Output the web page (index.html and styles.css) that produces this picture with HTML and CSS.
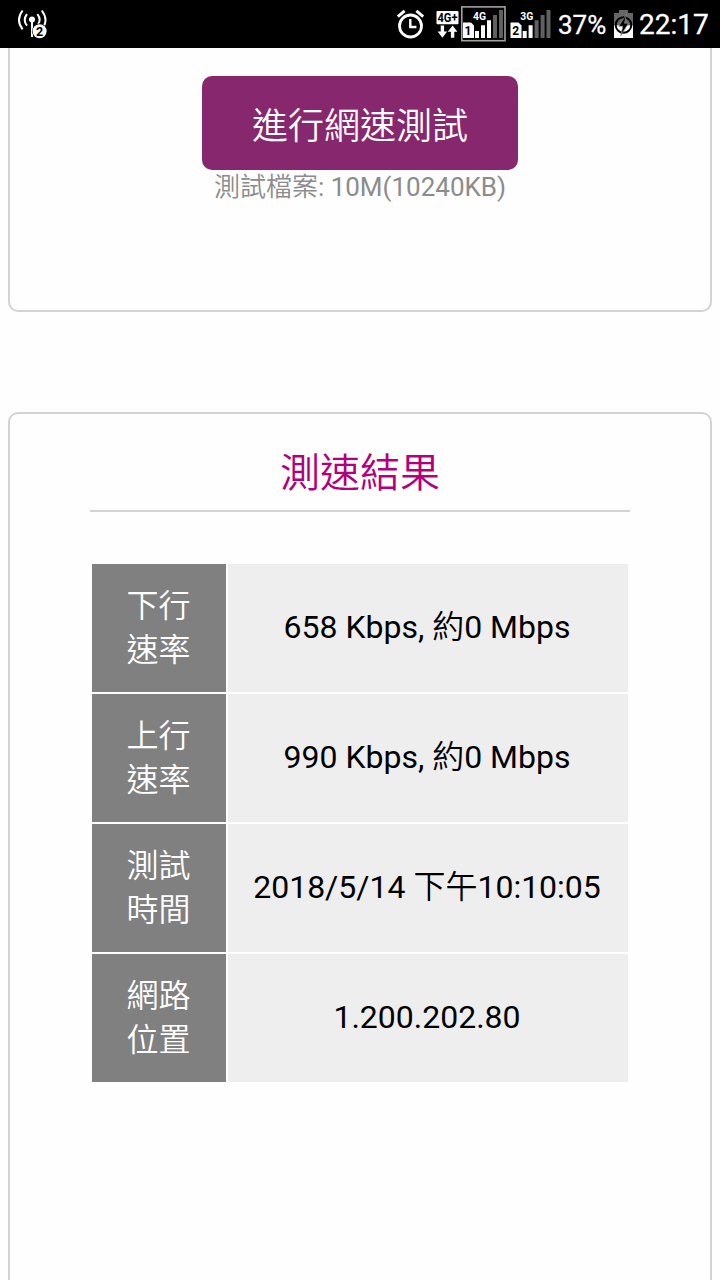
FILE: index.html
```html
<!DOCTYPE html>
<html lang="zh-Hant">
<head>
<meta charset="utf-8">
<title>測速結果</title>
<link rel="stylesheet" href="styles.css">
</head>
<body>
<header class="status-bar">
  <svg class="icon-antenna" viewBox="16 0 34 48" width="34" height="48">
    <g fill="none" stroke="#fff" stroke-width="2">
      <path d="M22.6 10.5Q15.4 20 22.6 29.3M27 14.2Q22.4 20 27 25.6M37.4 14.2Q41.6 19.5 38 24.5M41.8 10.5Q48.4 19.5 43.3 27"/>
      <path d="M32 20V37" stroke-width="2"/>
    </g>
    <circle cx="32" cy="19.6" r="3" fill="#fff"/>
    <circle cx="39.6" cy="31.2" r="7.6" fill="#000"/>
    <circle cx="39.6" cy="31.2" r="7" fill="#fff"/>
    <text class="glyph-text" x="39.6" y="35.5" font-size="12.5">2</text>
  </svg>
  <div class="indicators">
    <svg class="icon-alarm" viewBox="395 0 32 48" width="32" height="48">
      <g fill="none" stroke="#fff" stroke-width="2.8">
        <circle cx="410.5" cy="26" r="11"/>
        <path d="M397.8 16.6L404.6 10.9M416.4 10.9L423.2 16.6" stroke-width="3"/>
        <path d="M410.3 19V27H416.4" stroke-width="2.4"/>
      </g>
    </svg>
    <svg class="icon-data" viewBox="434 0 26 48" width="26" height="48">
      <rect x="436.5" y="11" width="22" height="13.2" rx="1" fill="#fff"/>
      <text class="glyph-text" x="447.5" y="21.8" font-size="12" textLength="20" lengthAdjust="spacingAndGlyphs">4G+</text>
      <path d="M440.7 25.4h3.4v6h3.1l-4.8 6.3-4.8-6.3h3.1zM450.9 37.7h3.4v-6h3.1l-4.8-6.3-4.8 6.3h3.1z" fill="#fff"/>
    </svg>
    <svg class="icon-sim-one" viewBox="461 0 45 48" width="45" height="48">
      <rect x="461.8" y="6.9" width="43.2" height="33.8" fill="none" stroke="#a2a2a2" stroke-width="1.6"/>
      <path d="M463 22.6h8l3 3V38h-11z" fill="#fff"/>
      <path d="M475 31h4v7h-4zM481 25.3h4V38h-4zM487 20.3h4V38h-4z" fill="#fff"/>
      <path d="M493 15h4v23h-4zM499 10h4v28h-4z" fill="#606060"/>
      <text class="glyph-text" x="468" y="35" font-size="12">1</text>
      <text class="glyph-text glyph-light" x="479.5" y="20" font-size="10.5" textLength="13" lengthAdjust="spacingAndGlyphs">4G</text>
    </svg>
    <svg class="icon-sim-two" viewBox="510 0 42 48" width="42" height="48">
      <path d="M510.5 22.6h8l3 3V38h-11z" fill="#fff"/>
      <path d="M522.7 31h4v7h-4zM528.6 25.3h4V38h-4z" fill="#fff"/>
      <path d="M534.6 20.3h4V38h-4zM540.6 15h4v23h-4zM546.5 10h4v28h-4z" fill="#606060"/>
      <text class="glyph-text" x="515.8" y="35" font-size="12">2</text>
      <text class="glyph-text glyph-light" x="526.8" y="20" font-size="10.5" textLength="13" lengthAdjust="spacingAndGlyphs">3G</text>
    </svg>
    <span class="battery-level">37%</span>
    <svg class="icon-battery" viewBox="613 0 22 48" width="22" height="48">
      <path d="M619 10h9v3h5v12.5h-19V13h5z" fill="#666"/>
      <path d="M614 25.3h19V38h-19z" fill="#fff"/>
      <circle cx="623.5" cy="25" r="7.8" fill="none" stroke="#000" stroke-width="2"/>
      <path d="M626.4 14.2L618.8 26.2H622.8L620.8 35.7L628.4 23.2H624.5Z" fill="#000" stroke="#888" stroke-width=".7"/>
    </svg>
    <time class="clock">22:17</time>
  </div>
</header>
<main class="page">
  <section class="card test-card">
    <button class="test-button" type="button">進行網速測試</button>
    <p class="file-note">測試檔案: 10M(10240KB)</p>
  </section>
  <section class="card result-card">
    <h1 class="result-title">測速結果</h1>
    <table class="results">
      <tr><th>下行<br>速率</th><td>658 Kbps, 約0 Mbps</td></tr>
      <tr><th>上行<br>速率</th><td>990 Kbps, 約0 Mbps</td></tr>
      <tr><th>測試<br>時間</th><td>2018/5/14 下午10:10:05</td></tr>
      <tr><th>網路<br>位置</th><td>1.200.202.80</td></tr>
    </table>
  </section>
</main>
</body>
</html>
```

FILE: styles.css
```css
* { box-sizing: border-box; }

body {
  margin: 0;
  height: 1280px;
  overflow: hidden;
  display: flex;
  flex-direction: column;
  background: #fefefe;
  color: #000;
  font-family: Roboto, "Noto Sans CJK TC DemiLight", "Noto Sans CJK TC", sans-serif;
}

.status-bar {
  flex: none;
  height: 48px;
  padding: 0 11px 0 16px;
  display: flex;
  justify-content: space-between;
  background: #000;
  color: #fff;
}

.status-bar svg { flex: none; display: block; }
.indicators { display: flex; white-space: nowrap; }
.icon-data { margin-left: 7px; }
.icon-sim-one { margin-left: 1px; }
.icon-sim-two { margin-left: 4px; }

.glyph-text {
  font-family: Roboto, sans-serif;
  font-weight: 700;
  text-anchor: middle;
  fill: #000;
}
.glyph-light { fill: #fff; }

.battery-level {
  width: 56px;
  margin-left: 5px;
  padding-left: 1px;
  font-size: 26px;
  line-height: 50px;
  -webkit-text-stroke: 0.3px #fff;
}

.clock {
  width: 70px;
  margin-left: 4px;
  font-size: 28px;
  line-height: 50px;
  -webkit-text-stroke: 0.3px #fff;
}

.page {
  flex: 1;
  min-height: 0;
  padding: 0 8px;
}

.card {
  border: 2px solid #d3d3d3;
  border-radius: 10px;
  text-align: center;
}

.test-card {
  height: 264px;
  padding-top: 28px;
  border-top: 0;
  border-radius: 0 0 10px 10px;
}

.test-button {
  display: block;
  width: 316px;
  height: 94px;
  margin: 0 auto;
  padding: 8px 0 0;
  border: 0;
  border-radius: 10px;
  background: #87286e;
  color: #fff;
  font: 400 36px/86px Roboto, "Noto Sans CJK TC DemiLight", "Noto Sans CJK TC", sans-serif;
}

.file-note {
  margin: 0;
  color: #8c8c8c;
  font-size: 26px;
  line-height: 34px;
}

.result-card {
  height: 900px;
  margin-top: 100px;
  padding: 26px 80px 0;
}

.result-title {
  height: 72px;
  margin: 0 0 50px;
  border-bottom: 2px solid #d3d3d3;
  color: #b3007c;
  font-size: 40px;
  font-weight: 400;
  line-height: 68px;
}

.results {
  width: 540px;
  border-spacing: 2px;
  table-layout: fixed;
  font-size: 32px;
  line-height: 44px;
}

.results th {
  width: 134px;
  height: 128px;
  padding: 0 1px 0 0;
  background: #808080;
  color: #fff;
  font-weight: 400;
}

.results td {
  padding: 0 2px 2px 0;
  background: #eee;
}
```
